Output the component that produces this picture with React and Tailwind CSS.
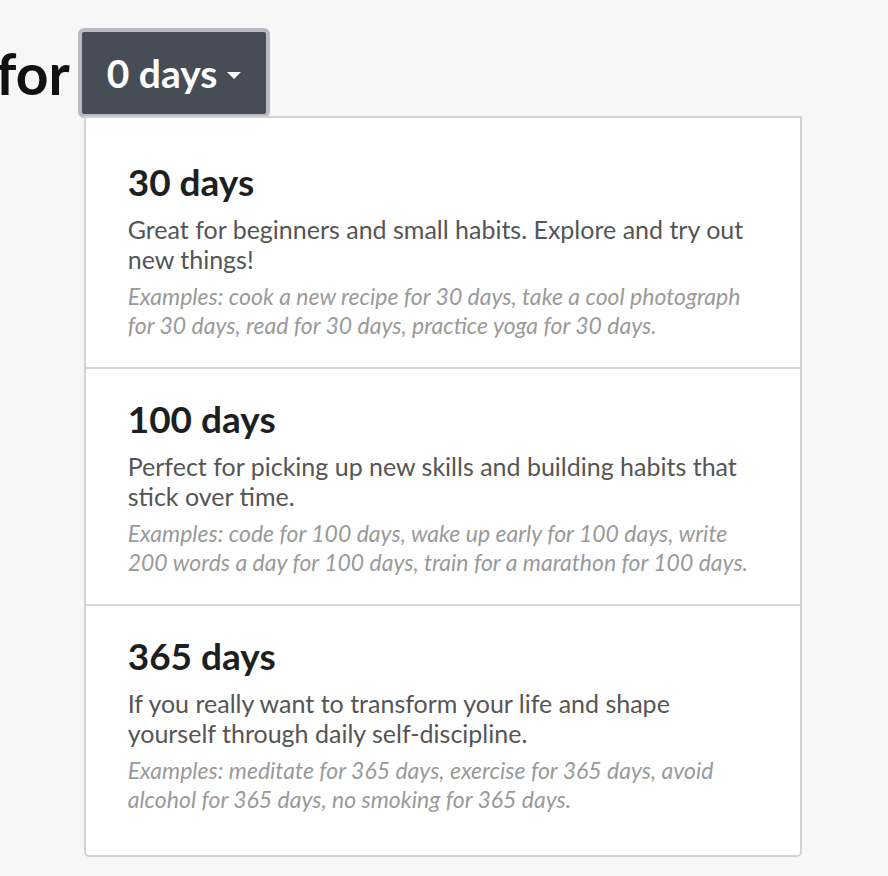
import React from 'react';

const options = [
  {
    title: '30 days',
    desc: 'Great for beginners and small habits. Explore and try out new things!',
    examples: 'Examples: cook a new recipe for 30 days, take a cool photograph for 30 days, read for 30 days, practice yoga for 30 days.',
  },
  {
    title: '100 days',
    desc: 'Perfect for picking up new skills and building habits that stick over time.',
    examples: 'Examples: code for 100 days, wake up early for 100 days, write 200 words a day for 100 days, train for a marathon for 100 days.',
  },
  {
    title: '365 days',
    desc: 'If you really want to transform your life and shape yourself through daily self-discipline.',
    examples: 'Examples: meditate for 365 days, exercise for 365 days, avoid alcohol for 365 days, no smoking for 365 days.',
  },
];

export default function App() {
  return (
    <div
      className="min-h-[876px] w-full overflow-hidden bg-[#f7f7f7] pt-[28px]"
      style={{ fontFamily: 'Lato, "Noto Sans", sans-serif' }}
    >
      <div className="flex items-center">
        <h1 className="-ml-[4px] mr-[8px] text-[57px] font-bold leading-none text-[#111]">for</h1>
        <div className="relative">
          <button className="flex h-[90px] w-[192px] items-center rounded-[6px] border-[4px] border-[#b8bcc2] bg-[#474d56] pl-[25px] text-[39px] font-bold text-white">
            <span>0 days</span>
            <svg className="ml-[10px] mt-[4px]" width="14" height="7" viewBox="0 0 14 7">
              <path d="M0 0h14L7 7z" fill="#fff" />
            </svg>
          </button>
          <div className="absolute left-[6px] top-[88px] w-[718px] rounded-b-[5px] border-2 border-[#d2d2d2] bg-white py-[14px]">
            {options.map((o, i) => (
              <div
                key={o.title}
                className={`px-[42px] pt-[28px] pb-[27px] ${i > 0 ? 'border-t-2 border-[#d6d6d6]' : ''}`}
              >
                <h2 className="text-[37px] font-bold leading-[44px] text-[#1d1f22]">{o.title}</h2>
                <p className="mt-[10px] text-[25px] leading-[30px] text-[#555]">{o.desc}</p>
                <p className="mt-[8px] text-[23px] italic leading-[29px] text-[#9a9a9a]">{o.examples}</p>
              </div>
            ))}
          </div>
        </div>
      </div>
    </div>
  );
}
